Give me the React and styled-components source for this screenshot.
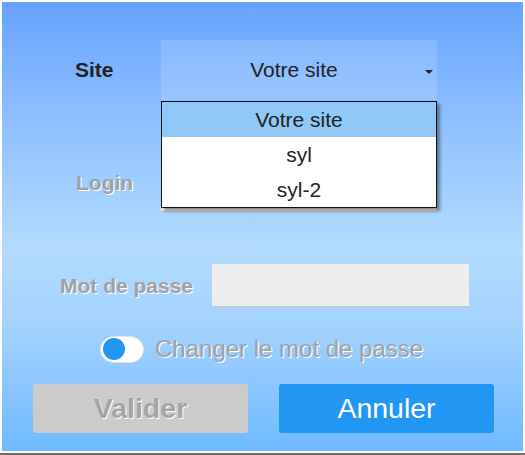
import React, { useState } from 'react';
import styled, { createGlobalStyle } from 'styled-components';

const GlobalStyle = createGlobalStyle`
  html, body {
    margin: 0;
    padding: 0;
    background: #ffffff;
  }
  * {
    box-sizing: border-box;
  }
`;

const sites = ['Votre site', 'syl', 'syl-2'];

const App = () => {
  const [selected, setSelected] = useState('Votre site');
  const [changePwd, setChangePwd] = useState(false);

  return (
    <Frame>
      <GlobalStyle />
      <Panel>
        <Row $indent={73} $labelWidth={86}>
          <Label $active>Site</Label>
          <SelectBox>
            <SelectValue>{selected}</SelectValue>
            <Caret />
            <DropList>
              {sites.map((s) => (
                <DropItem key={s} $highlight={s === selected} onClick={() => setSelected(s)}>
                  {s}
                </DropItem>
              ))}
            </DropList>
          </SelectBox>
        </Row>

        <Row $indent={74} $labelWidth={85} $top={53}>
          <Label>Login</Label>
          <TextInput $width={276} $height={59} disabled />
        </Row>

        <Row $indent={58} $labelWidth={152} $top={52}>
          <Label>Mot de passe</Label>
          <TextInput $width={257} $height={43} type='password' disabled />
        </Row>

        <ToggleRow>
          <Toggle onClick={() => setChangePwd(!changePwd)}>
            <Knob $on={changePwd} />
          </Toggle>
          <ToggleText>Changer le mot de passe</ToggleText>
        </ToggleRow>

        <ButtonBar>
          <Button disabled>Valider</Button>
          <Button $primary>Annuler</Button>
        </ButtonBar>
      </Panel>
    </Frame>
  );
};

export default App;

const Frame = styled.div`
  width: 525px;
  height: 455px;
  padding: 2px 2px 2px 2px;
  border-bottom: 2px solid #6e6e6e;
  background: #ffffff;
  font-family: 'Liberation Sans', Arial, sans-serif;
`;

const Panel = styled.div`
  width: 521px;
  height: 449px;
  padding-top: 38px;
  display: flex;
  flex-direction: column;
  background: linear-gradient(
    to bottom,
    #66a3ff 0%,
    #8dbfff 25%,
    #b2dbff 55%,
    #a4d2ff 72%,
    #6fbaff 100%
  );
`;

const Row = styled.div`
  display: flex;
  align-items: center;
  padding-left: ${(p) => p.$indent}px;
  margin-top: ${(p) => p.$top || 0}px;
  & > :first-child {
    width: ${(p) => p.$labelWidth}px;
    flex-shrink: 0;
  }
`;

const Label = styled.span`
  font-size: 21px;
  font-weight: bold;
  color: ${(p) => (p.$active ? '#222222' : '#a2a2a2')};
  text-shadow: ${(p) => (p.$active ? 'none' : '1px 1px 0 #ffffff')};
`;

const SelectBox = styled.div`
  position: relative;
  width: 276px;
  height: 60px;
  display: flex;
  align-items: center;
  padding-right: 4px;
  background: rgba(255, 255, 255, 0.15);
  color: #222222;
  font-size: 21px;
  cursor: pointer;
`;

const SelectValue = styled.span`
  flex: 1;
  text-align: center;
  padding-left: 2px;
`;

const Caret = styled.span`
  width: 0;
  height: 0;
  margin-top: 4px;
  border-left: 4px solid transparent;
  border-right: 4px solid transparent;
  border-top: 4px solid #222222;
`;

const DropList = styled.div`
  position: absolute;
  top: calc(100% + 1px);
  left: 0;
  width: 276px;
  border: 1px solid #111111;
  background: #ffffff;
  box-shadow: 3px 3px 3px rgba(0, 0, 0, 0.4);
  z-index: 5;
`;

const DropItem = styled.div`
  height: 35px;
  line-height: 35px;
  text-align: center;
  font-size: 21px;
  color: #222222;
  background: ${(p) => (p.$highlight ? '#90c8f8' : '#ffffff')};
`;

const TextInput = styled.input`
  width: ${(p) => p.$width}px;
  height: ${(p) => p.$height}px;
  border: none;
  border-bottom: 1px solid #c4c4c4;
  background: #eeeeee;
  outline: none;
  font-size: 18px;
`;

const ToggleRow = styled.div`
  display: flex;
  align-items: center;
  gap: 11px;
  padding-left: 98px;
  margin-top: 28px;
`;

const Toggle = styled.div`
  width: 44px;
  height: 27px;
  border-radius: 14px;
  background: #ffffff;
  border: 1px solid #e2e2e2;
  display: flex;
  align-items: center;
  padding: 0 2px;
  cursor: pointer;
`;

const Knob = styled.div`
  width: 22px;
  height: 22px;
  border-radius: 50%;
  background: #2196f3;
  margin-left: ${(p) => (p.$on ? '16px' : '0')};
`;

const ToggleText = styled.span`
  font-size: 24px;
  color: #a2a2a2;
  text-shadow: 1px 1px 0 #ffffff;
`;

const ButtonBar = styled.div`
  display: flex;
  gap: 31px;
  padding-left: 31px;
  margin-top: 21px;
`;

const Button = styled.button`
  width: 215px;
  height: 49px;
  border: none;
  border-radius: 3px;
  font-family: 'Liberation Sans', Arial, sans-serif;
  font-size: 28.5px;
  font-weight: ${(p) => (p.$primary ? 'normal' : 'bold')};
  background: ${(p) => (p.$primary ? '#2196f3' : '#cbcbcb')};
  color: ${(p) => (p.$primary ? '#ffffff' : '#a5a5a5')};
  text-shadow: ${(p) => (p.$primary ? 'none' : '1px 1px 0 #ffffff')};
  cursor: ${(p) => (p.$primary ? 'pointer' : 'default')};
`;
